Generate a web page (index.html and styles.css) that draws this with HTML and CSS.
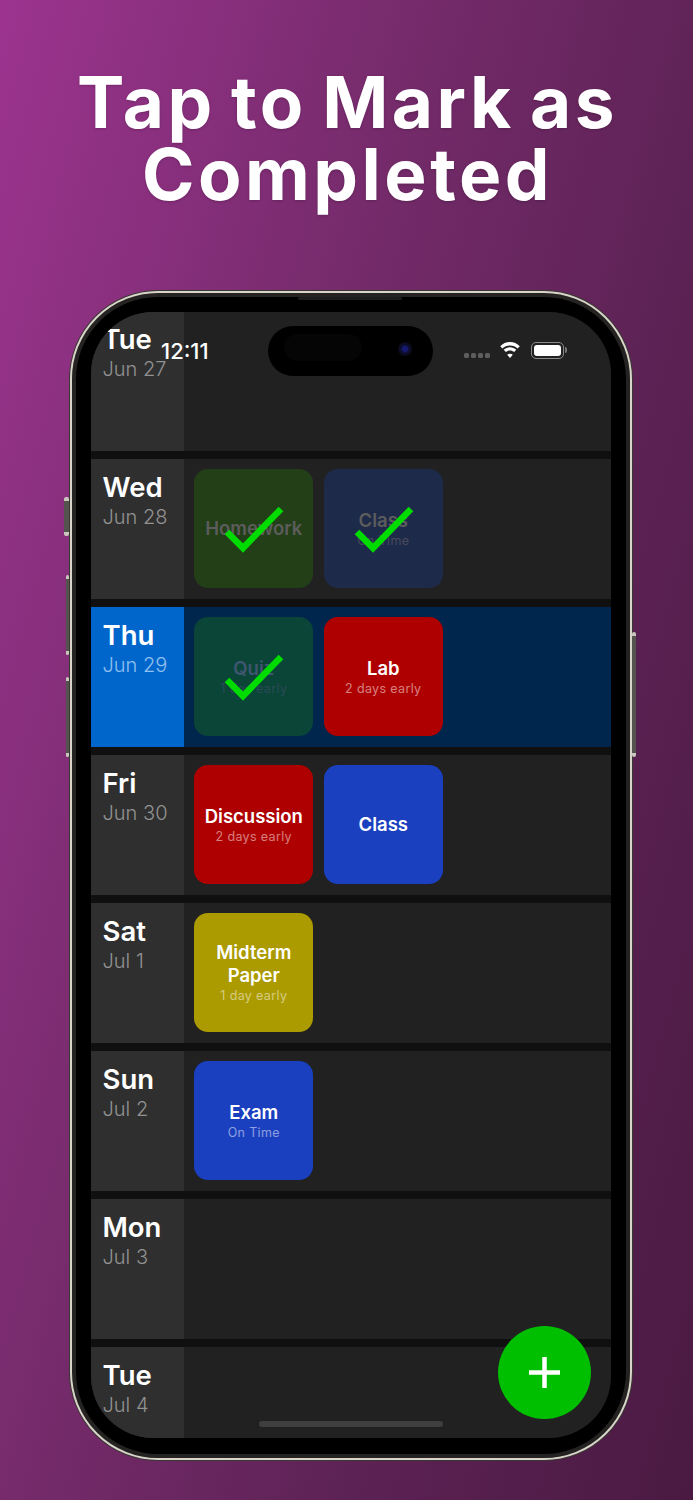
FILE: index.html
```html
<!DOCTYPE html>
<html lang="en">
<head>
<meta charset="utf-8">
<title>Tap to Mark as Completed</title>
<link rel="stylesheet" href="styles.css">
</head>
<body>
<h1 class="headline">Tap to Mark as<br>Completed</h1>
<div class="phone">
  <span class="btn btn-mute"></span>
  <span class="btn btn-up"></span>
  <span class="btn btn-down"></span>
  <span class="btn btn-power"></span>
  <span class="speaker"></span>
  <div class="screen">
    <div class="list">
      <div class="row">
        <div class="day"><div class="dow">Tue</div><div class="date">Jun 27</div></div>
        <div class="cards"></div>
      </div>
      <div class="row">
        <div class="day"><div class="dow">Wed</div><div class="date">Jun 28</div></div>
        <div class="cards">
          <div class="card done-green"><div class="name">Homework</div>
            <svg class="check" viewBox="0 0 119 119"><polyline points="33,63 49,79 87,40"/></svg></div>
          <div class="card done-blue"><div class="name">Class</div><div class="note">On Time</div>
            <svg class="check" viewBox="0 0 119 119"><polyline points="33,63 49,79 87,40"/></svg></div>
        </div>
      </div>
      <div class="row today">
        <div class="day"><div class="dow">Thu</div><div class="date">Jun 29</div></div>
        <div class="cards">
          <div class="card done-teal"><div class="name">Quiz</div><div class="note">1 day early</div>
            <svg class="check" viewBox="0 0 119 119"><polyline points="33,63 49,79 87,40"/></svg></div>
          <div class="card red"><div class="name">Lab</div><div class="note">2 days early</div></div>
        </div>
      </div>
      <div class="row">
        <div class="day"><div class="dow">Fri</div><div class="date">Jun 30</div></div>
        <div class="cards">
          <div class="card red"><div class="name">Discussion</div><div class="note">2 days early</div></div>
          <div class="card blue"><div class="name">Class</div></div>
        </div>
      </div>
      <div class="row">
        <div class="day"><div class="dow">Sat</div><div class="date">Jul 1</div></div>
        <div class="cards">
          <div class="card olive"><div class="name">Midterm Paper</div><div class="note">1 day early</div></div>
        </div>
      </div>
      <div class="row">
        <div class="day"><div class="dow">Sun</div><div class="date">Jul 2</div></div>
        <div class="cards">
          <div class="card blue"><div class="name">Exam</div><div class="note">On Time</div></div>
        </div>
      </div>
      <div class="row">
        <div class="day"><div class="dow">Mon</div><div class="date">Jul 3</div></div>
        <div class="cards"></div>
      </div>
      <div class="row">
        <div class="day"><div class="dow">Tue</div><div class="date">Jul 4</div></div>
        <div class="cards"></div>
      </div>
    </div>
    <div class="home-bar"></div>
  </div>
  <div class="time">12:11</div>
  <div class="island"><span class="island-sensor"></span><span class="island-lens"></span></div>
  <div class="signal"><i></i><i></i><i></i><i></i></div>
  <svg class="wifi" viewBox="0 0 22 17"><path d="M11 3.500c3 0 5.600 1.100 7.600 3l2.200-2.300C18.200 1.600 14.800 0 11 0S3.800 1.600 1.200 4.200l2.200 2.300c2-1.900 4.600-3 7.600-3zm0 5c1.600 0 3 .6 4.100 1.600l2.200-2.300C15.700 6.300 13.400 5.300 11 5.300S6.300 6.300 4.700 7.800l2.200 2.300C8 9.100 9.400 8.500 11 8.500zm0 3.200c-1.100 0-2.100.4-2.800 1.100l2.800 3.200 2.800-3.200c-.7-.7-1.700-1.100-2.800-1.100z" fill="#fff"/></svg>
  <div class="battery"><span class="battery-fill"></span></div>
  <button class="fab" aria-label="Add">
    <svg viewBox="0 0 31 31"><path d="M13.250 0h4.500v13.250H31v4.500H17.750V31h-4.500V17.750H0v-4.500h13.250z" fill="#fff"/></svg>
  </button>
</div>
</body>
</html>
```
FILE: styles.css
```css
* { box-sizing: border-box; }
html, body { margin: 0; padding: 0; }
body {
  width: 693px;
  height: 1500px;
  overflow: hidden;
  background: linear-gradient(105deg, #9c348f 0%, #722a68 42%, #5a2152 72%, #4a1a42 100%);
  font-family: Inter, "Liberation Sans", sans-serif;
  color: #fff;
}
.headline {
  margin: 0;
  padding: 66px 0 0 2px;
  height: 291px;
  font-family: Inter, sans-serif;
  font-weight: 700;
  font-size: 71px;
  line-height: 72px;
  text-align: center;
  letter-spacing: 3.500px;
  word-spacing: -5px;
  text-shadow: 0 1px 3px rgba(0, 0, 0, 0.2);
}
.phone {
  position: relative;
  width: 562px;
  height: 1169px;
  margin-left: 70px;
  padding: 21px;
  border-radius: 88px;
  background: #000;
  border: 2px solid #d8d4ca;
  box-shadow: 0 0 0 1px #3a3833, inset 0 0 0 4px #242321;
}
.btn {
  position: absolute;
  width: 3px;
  background: linear-gradient(#c9c6bc 0 4px, #55534e 4px calc(100% - 4px), #c9c6bc calc(100% - 4px));
  border-radius: 2px;
}
.btn-mute { left: -8px; top: 204px; height: 39px; width: 5px; }
.btn-up { left: -6px; top: 282px; height: 80px; }
.btn-down { left: -6px; top: 384px; height: 80px; }
.btn-power { right: -6px; top: 339px; height: 125px; width: 4px; }
.speaker {
  position: absolute;
  left: 226px;
  top: 4px;
  width: 104px;
  height: 3px;
  border-radius: 2px;
  background: #1d1d1d;
}
.screen {
  position: relative;
  width: 520px;
  height: 1126px;
  margin: -2px 0 0 -2px;
  border-radius: 62px;
  overflow: hidden;
  background: #101010;
}
.list {
  display: flex;
  flex-direction: column;
  gap: 8px;
  margin-top: -1px;
}
.row {
  display: flex;
  flex: none;
  height: 140px;
  background: #212121;
}
.day {
  flex: none;
  width: 93px;
  padding: 12px 0 0 11.500px;
  background: #2f2f2f;
}
.dow {
  font-size: 27.500px;
  font-weight: 600;
  line-height: 33px;
}
.date {
  font-size: 20px;
  font-weight: 300;
  line-height: 27px;
  color: #929292;
}
.today { background: #00264d; }
.today .day { background: #0066cc; }
.today .date { color: #8fc0ef; }
.cards {
  display: flex;
  gap: 10.500px;
  padding: 10px 0 0 10.300px;
}
.card {
  position: relative;
  display: flex;
  flex-direction: column;
  justify-content: center;
  align-items: center;
  width: 119px;
  height: 119px;
  padding: 0 6px;
  border-radius: 14px;
  text-align: center;
}
.name {
  font-size: 18.500px;
  font-weight: 600;
  line-height: 23px;
}
.note {
  font-size: 12.500px;
  font-weight: 400;
  line-height: 17px;
  letter-spacing: 0.35px;
  color: rgba(255, 255, 255, 0.5);
}
.red { background: #ae0000; }
.blue { background: #1a3fbf; }
.olive { background: #ab9a00; }
.done-green { background: #233f18; }
.done-blue { background: #1e2a4a; }
.done-teal { background: #0a4538; }
.done-green .name, .done-blue .name { color: #5c5c5c; }
.done-green .note, .done-blue .note { color: #464b5c; }
.done-teal .name { color: #3f5570; }
.done-teal .note { color: #2a4a56; }
.check {
  position: absolute;
  inset: 0;
  width: 119px;
  height: 119px;
}
.check polyline {
  fill: none;
  stroke: #00dc00;
  stroke-width: 6.500;
}
.home-bar {
  position: absolute;
  left: 168px;
  bottom: 11px;
  width: 184px;
  height: 6px;
  border-radius: 3px;
  background: #3f3f3f;
}
.time {
  position: absolute;
  left: 89px;
  top: 45px;
  font-size: 22px;
  font-weight: 500;
  line-height: 26px;
}
.island {
  position: absolute;
  left: 196px;
  top: 33px;
  width: 165px;
  height: 50px;
  border-radius: 25px;
  background: #000;
}
.island-sensor {
  position: absolute;
  left: 16px;
  top: 8px;
  width: 78px;
  height: 27px;
  border-radius: 14px;
  background: #050505;
}
.island-lens {
  position: absolute;
  left: 130px;
  top: 16px;
  width: 14px;
  height: 14px;
  border-radius: 50%;
  background: radial-gradient(circle, #14186e 0 25%, #0b0b26 45%, #0a0a12 100%);
}
.signal {
  position: absolute;
  left: 392px;
  top: 60px;
  display: flex;
  gap: 2.500px;
}
.signal i {
  width: 4.500px;
  height: 4.500px;
  border-radius: 1.500px;
  background: #5e5e5e;
}
.wifi {
  position: absolute;
  left: 427px;
  top: 49px;
  width: 22px;
  height: 17px;
}
.battery {
  position: absolute;
  left: 459px;
  top: 49px;
  width: 33px;
  height: 17px;
  padding: 2px;
  border: 1px solid #8a8a8a;
  border-radius: 5px;
}
.battery::after {
  content: "";
  position: absolute;
  right: -4px;
  top: 4px;
  width: 2px;
  height: 6px;
  border-radius: 0 2px 2px 0;
  background: #777;
}
.battery-fill {
  display: block;
  height: 100%;
  border-radius: 3px;
  background: #fff;
}
.fab {
  position: absolute;
  left: 426px;
  top: 1033px;
  display: flex;
  align-items: center;
  justify-content: center;
  width: 93px;
  height: 93px;
  padding: 0;
  border: 0;
  border-radius: 50%;
  background: #00bf00;
}
.fab svg { width: 31px; height: 31px; }
```
